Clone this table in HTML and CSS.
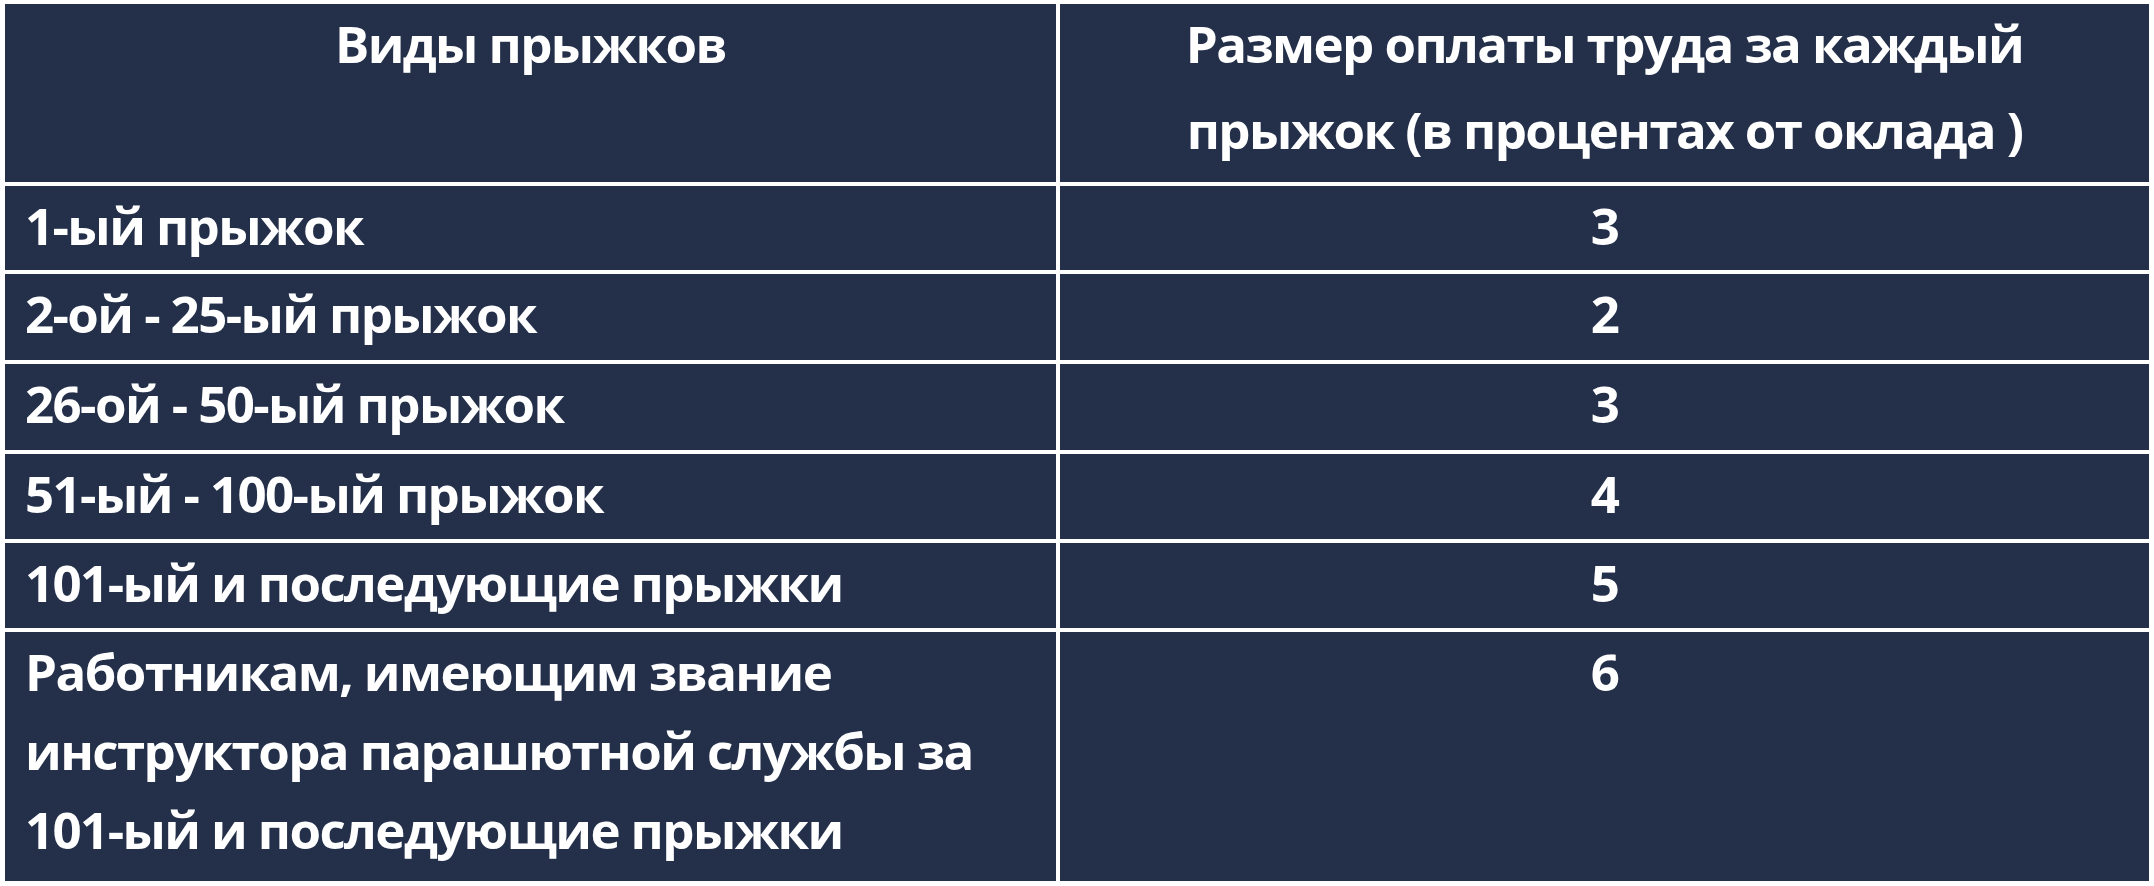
FILE: index.html
```html
<!DOCTYPE html>
<html lang="ru">
<head>
<meta charset="utf-8">
<title>Оплата прыжков</title>
<link rel="stylesheet" href="styles.css">
</head>
<body>
<div class="table">
  <div class="cell head"><div class="htext">Виды прыжков</div></div>
  <div class="cell head num"><div class="htext">Размер оплаты труда за каждый прыжок (в процентах от оклада )</div></div>
  <div class="cell">1-ый прыжок</div>
  <div class="cell num">3</div>
  <div class="cell">2-ой - 25-ый прыжок</div>
  <div class="cell num">2</div>
  <div class="cell">26-ой - 50-ый прыжок</div>
  <div class="cell num">3</div>
  <div class="cell">51-ый - 100-ый прыжок</div>
  <div class="cell num">4</div>
  <div class="cell">101-ый и последующие прыжки</div>
  <div class="cell num">5</div>
  <div class="cell">Работникам, имеющим звание инструктора парашютной службы за 101-ый и последующие прыжки</div>
  <div class="cell num">6</div>
</div>
</body>
</html>
```

FILE: styles.css
```css
html, body {
  margin: 0;
  padding: 0;
  background: #ffffff;
}

.table {
  display: grid;
  grid-template-columns: 1051px 1089px;
  grid-template-rows: 178px 84px 86px 86px 85px 85px 249px;
  gap: 4px;
  padding: 4px 0 0 5px;
  width: 2144px;
  font-family: "Open Sans", "Liberation Sans", sans-serif;
  font-weight: 700;
  font-size: 51px;
  letter-spacing: -1.6px;
  line-height: 79px;
  color: #ffffff;
}

.cell {
  background: #24304a;
  padding: 0 20px 0 20px;
  box-sizing: border-box;
  overflow: hidden;
}

.head {
  text-align: center;
  line-height: 86px;
}

.htext {
  margin-top: -4px;
}

.num {
  text-align: center;
}
```
